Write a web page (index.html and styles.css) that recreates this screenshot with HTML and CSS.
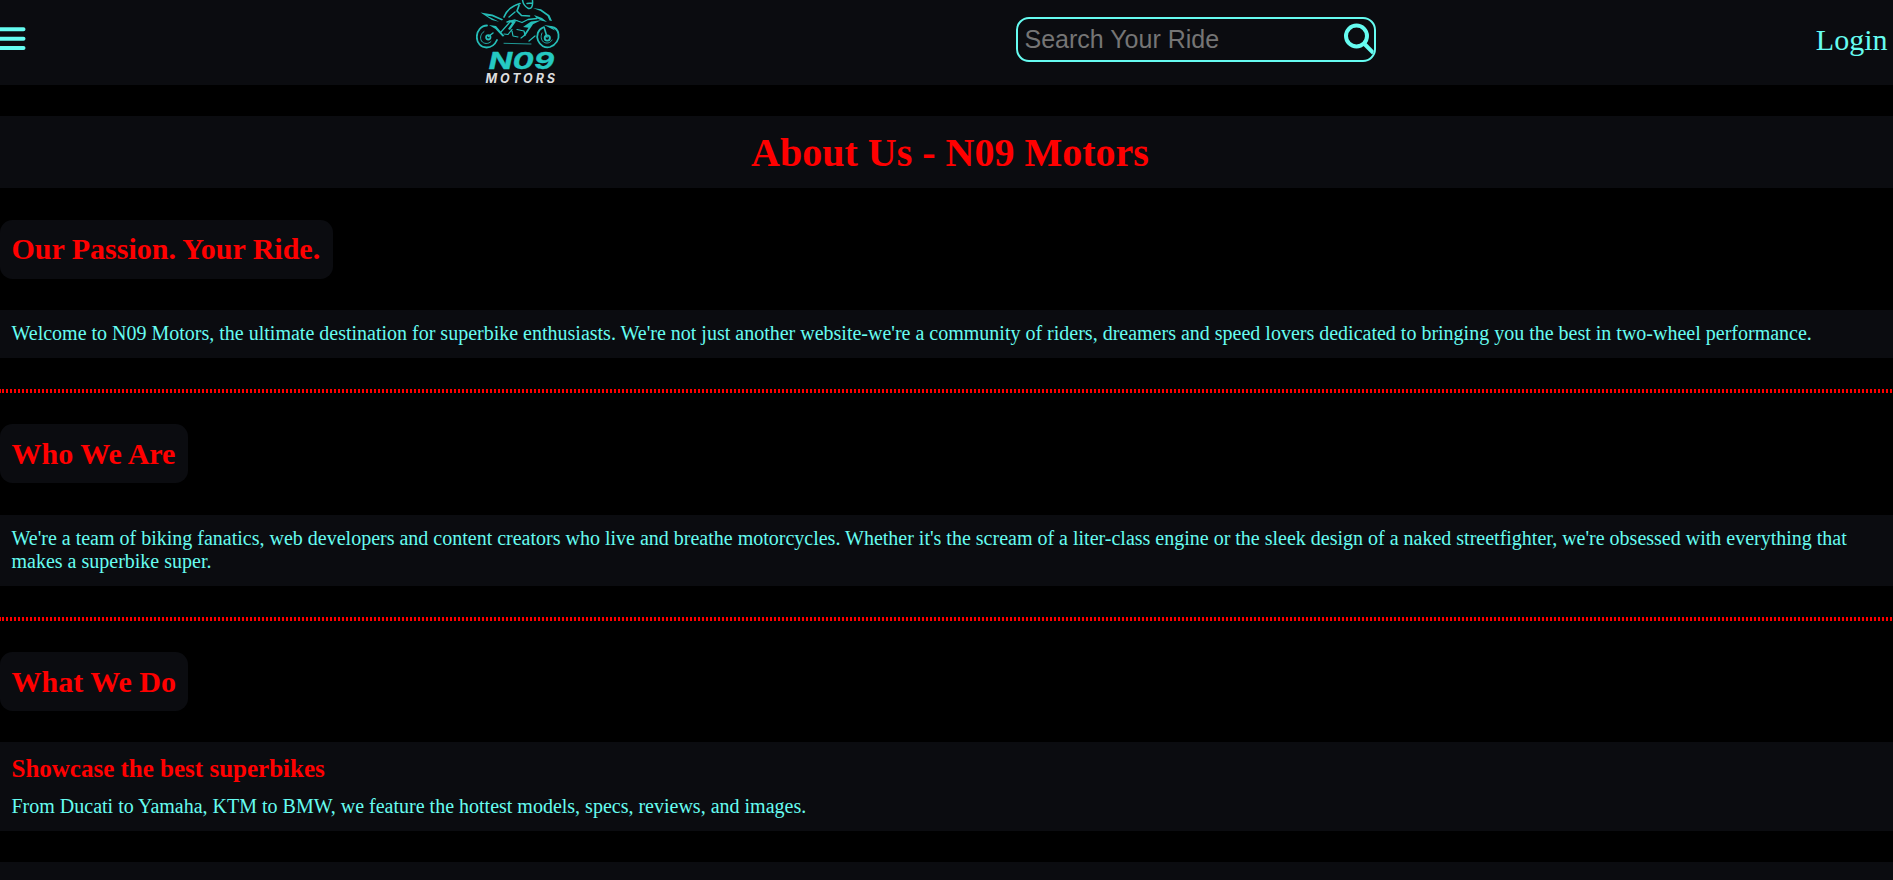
FILE: index.html
```html
<!DOCTYPE html>
<html lang="en">
<head>
<meta charset="utf-8">
<title>N09 Motors</title>
<link rel="stylesheet" href="styles.css">
</head>
<body>
<header class="navbar">
  <svg class="menu" width="26" height="26" viewBox="0 0 26 26"><path d="M-3 3.2H23.5M-3 12.7H23.5M-3 22H23.5" stroke-width="4" stroke-linecap="round" stroke="#66fcf1"/></svg>
  <svg class="logo" width="85" height="85" viewBox="0 0 85 85">
    <g fill="none" stroke="#25bdb7" stroke-linecap="round" stroke-linejoin="round">
      <path d="M11 25.5C5 25.5 .8 31 .8 37c0 6 4.200 10.500 9.700 10.500 5 0 8.500-3 10.500-7.500" stroke-width="1.800"/>
      <path d="M8 31.500c-3 2-4.500 6-2.500 9.500 2 3 7 3.500 9.500.5" stroke-width=".9"/>
      <circle cx="12.300" cy="37.300" r="2.200" stroke-width="1.800"/>
      <path d="M12.500 36.500l4.500-3.500" stroke-width="1.500"/>
      <path d="M67 27.500c-5 2-7 8-5 13 2 5 7 8 12 6.500 6-2 9.500-8 8.500-13-.7-4-3-6.500-7-7" stroke-width="1.800"/>
      <path d="M66 33c-1.500 3-1 7 1.500 9 3 2 7 1 8.500-2" stroke-width=".9"/>
      <circle cx="71.300" cy="38" r="2.600" stroke-width="1.900"/>
      <path d="M71 37l-3-10" stroke-width="1.600"/>
      <path d="M28 17C31 10 35 6 44 3.500M43 5.500l-2 5.500 4.500 4.500 8 .500" stroke-width="1.700"/>
      <path d="M46.500 0c.5 4 2 6.500 6 8.500 3 .5 4.500-2 4-8M51 3.500l5-.5" stroke-width="1.500"/>
      <path d="M25 32l9-10 7-1.500M28 34l4 .500 4-5M36 31l1 5 5 1M48 31l-7-1.500M48 31l1 4-4 3M59 36l-6 5" stroke-width="1.200"/>
      <path d="M33 17l6-5M31 22l8-2 7 2.500 6-3 9-1" stroke-width="1.300"/>
      <path d="M28 43.300l27 .7" stroke-width=".8"/>
    </g>
    <g fill="#25bdb7">
      <path d="M4.500 12.500l12 2 10.500 4.700-1 1.300-10-4.200-5-.5 12 6-7-1.800z"/>
      <path d="M13 25l7 1 8.500 10-2 .5-7-7.500z"/>
      <path d="M32 20l8 1.500-6 8.500-2-1 4-6z"/>
      <path d="M57 8l8 1.300 8.500 6L76 21l-2.500-.5-2-4.500-7-5z"/>
      <path d="M47 27l8-5.500 10-1.300-8 4-8 12-1.500-1 5-7.500z"/>
      <path d="M58 15l8 3 5 4-6-1.500-5-3z"/>
      <path d="M68 25l7 1 4 4.500-6-3z"/>
    </g>
    <text x="12.500" y="69.300" textLength="66" lengthAdjust="spacingAndGlyphs" class="logo-name">N09</text>
    <text x="9.500" y="82.700" textLength="69.500" lengthAdjust="spacing" class="logo-sub">MOTORS</text>
  </svg>
  <div class="search">
    <input class="search-input" type="text" placeholder="Search Your Ride">
    <svg class="search-icon" width="32" height="32" viewBox="0 0 32 32" fill="none" stroke="#66fcf1" stroke-width="4"><circle cx="13.5" cy="13" r="10.5"/><path d="M21 20.5L30.5 30"/></svg>
  </div>
  <a class="login">Login</a>
</header>
<main>
  <h1 class="title">About Us - N09 Motors</h1>
  <h2 class="heading">Our Passion. Your Ride.</h2>
  <p class="panel">Welcome to N09 Motors, the ultimate destination for superbike enthusiasts. We're not just another website-we're a community of riders, dreamers and speed lovers dedicated to bringing you the best in two-wheel performance.</p>
  <hr class="rule">
  <h2 class="heading heading-low">Who We Are</h2>
  <p class="panel panel-lower">We're a team of biking fanatics, web developers and content creators who live and breathe motorcycles. Whether it's the scream of a liter-class engine or the sleek design of a naked streetfighter, we're obsessed with everything that makes a superbike super.</p>
  <hr class="rule">
  <h2 class="heading heading-low">What We Do</h2>
  <section class="panel feature">
    <h3 class="subheading">Showcase the best superbikes</h3>
    <p class="feature-text">From Ducati to Yamaha, KTM to BMW, we feature the hottest models, specs, reviews, and images.</p>
  </section>
  <section class="panel feature feature-last"></section>
</main>
</body>
</html>
```
FILE: styles.css
```css
* { box-sizing: border-box; margin: 0; padding: 0; }
body {
  height: 880px;
  overflow: hidden;
  background: #000;
  color: #66fcf1;
  font-family: "Liberation Serif", "Times New Roman", serif;
  font-size: 20px;
  line-height: 23px;
}
.navbar {
  display: flex;
  height: 85px;
  padding-right: 5.5px;
  background: #0b0c10;
}
.menu { flex: none; margin-top: 26px; }
.logo { flex: none; margin-left: 450px; }
.logo-name { font: italic 700 23px Inter, sans-serif; fill: #25c9c2; stroke: #25c9c2; stroke-width: 0.3; }
.logo-sub { font: italic 700 12.5px Inter, sans-serif; fill: #dcdcde; }
.search {
  display: flex;
  flex: none;
  width: 360px;
  height: 45px;
  margin: 17px 0 0 455px;
  padding-left: 6.5px;
  border: 2px solid #66fcf1;
  border-radius: 13px;
  overflow: hidden;
}
.search-input {
  flex: 1;
  min-width: 0;
  height: 41px;
  border: 0;
  background: transparent;
  color: #66fcf1;
  font: 25px "Liberation Sans", Arial, sans-serif;
}
.search-input::placeholder { color: #757575; }
.search-icon { flex: none; margin: 4px -1px 0 0; }
.login { margin: 22px 0 0 auto; font-size: 30px; line-height: 35px; }
.title {
  height: 72px;
  margin: 31px 0 32px;
  padding: 14px 0 0 7px;
  background: #0b0c10;
  color: #f00;
  font-size: 40px;
  line-height: 46px;
  text-align: center;
}
.heading {
  width: fit-content;
  height: 59px;
  margin-bottom: 31px;
  padding: 12px 12.5px 13px 11.5px;
  border-radius: 12.5px;
  background: #0b0c10;
  color: #f00;
  font-size: 30px;
  line-height: 34px;
}
.heading-low { padding-top: 13px; }
.panel {
  margin-bottom: 31px;
  padding: 12px 12px 13px 11.5px;
  background: #0b0c10;
}
.panel-lower { margin-top: 32px; }
.rule {
  height: 4px;
  margin-bottom: 31px;
  border: 0;
  background:
    linear-gradient(#f00, #f00) 0 0 / 1px 4px no-repeat,
    repeating-linear-gradient(90deg, #000 0 2px, #f00 2px 4px);
}
.feature { height: 89px; }
.feature-last { height: 18px; margin-bottom: 0; padding: 0; }
.subheading { margin-bottom: 12px; color: #f00; font-size: 25px; line-height: 29px; }
```
